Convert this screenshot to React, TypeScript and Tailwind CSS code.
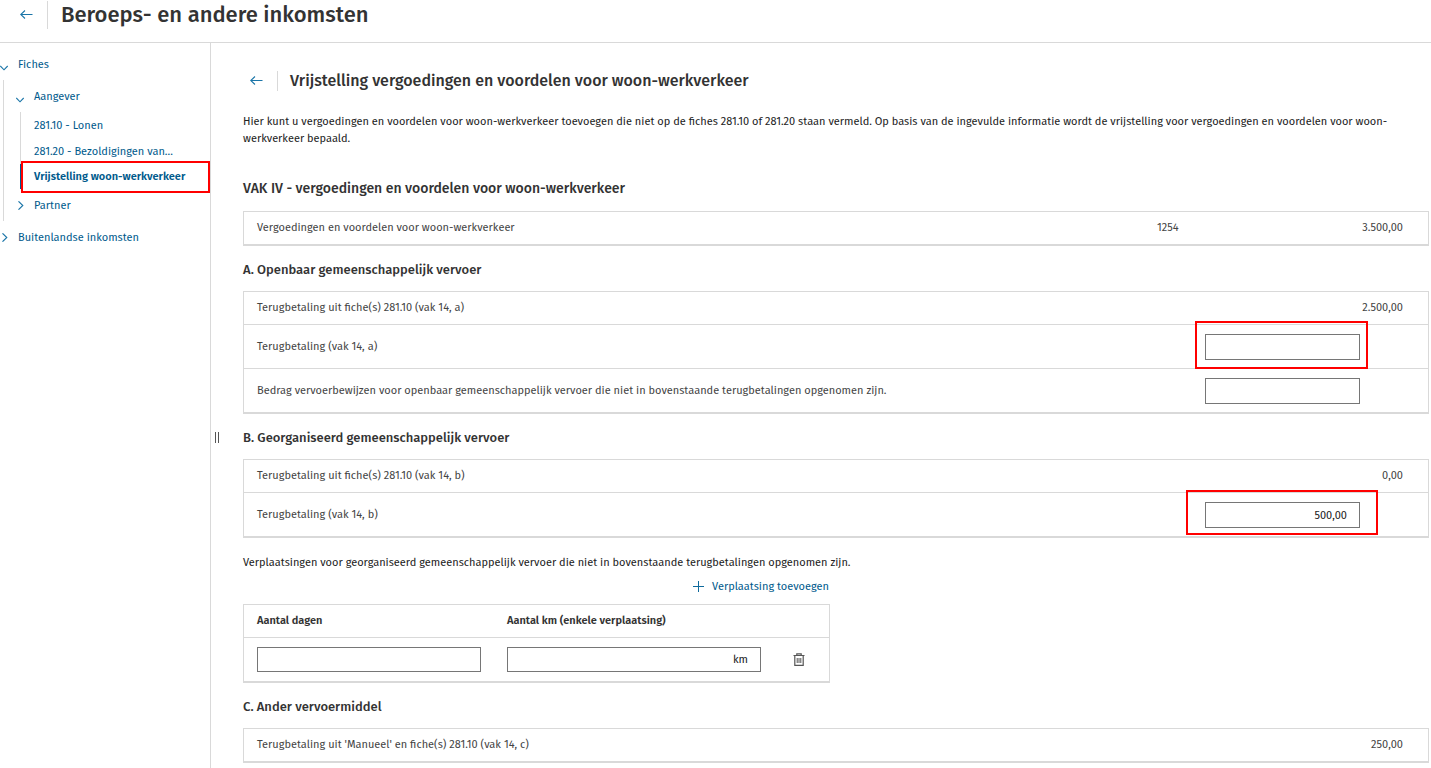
import { useState } from "react"
import type { ReactNode } from "react"
import clsx from "clsx"

function ArrowLeft() {
  return (
    <svg width="13" height="11" viewBox="0 0 13 11" fill="none" stroke="#1a75a8" strokeWidth="1.1">
      <path d="M5 .5.7 4.5 5 8.5M.7 4.5H12.5" />
    </svg>
  )
}

function ChevronDown() {
  return (
    <svg width="9" height="6" viewBox="0 0 9 6" fill="none" stroke="#1a75a8" strokeWidth="1.1">
      <path d="M.3 1 4 4.8 7.7 1" />
    </svg>
  )
}

function ChevronRight() {
  return (
    <svg width="6" height="9" viewBox="0 0 6 9" fill="none" stroke="#1a75a8" strokeWidth="1.1">
      <path d="M.5.3 4.8 4.5.5 8.7" />
    </svg>
  )
}

function Plus() {
  return (
    <svg width="11" height="11" viewBox="0 0 11 11" fill="none" stroke="#0f6a9c">
      <path d="M5.5 0v11M0 5.5h11" />
    </svg>
  )
}

function Trash() {
  return (
    <svg width="12" height="13" viewBox="0 0 12 13" fill="none" stroke="#555">
      <path d="M3.8 2V.8h4.4V2M.5 2.5h11M1.8 2.5v9.8h8.4V2.5" strokeWidth="1.2" />
      <path d="M4.2 5v5M6 5v5M7.8 5v5" />
    </svg>
  )
}

type TableProps = {
  label: string
  className?: string
  children: ReactNode
}

function Table({ label, className = "w-full", children }: TableProps) {
  return (
    <table
      aria-label={label}
      className={clsx(
        "border-separate border-spacing-0 border border-b-2 border-[#d9d9d9] text-[#444]",
        className
      )}
    >
      {children}
    </table>
  )
}

type AmountRowProps = {
  label: string
  code?: string
  amount: string
  last?: boolean
}

function AmountRow({ label, code, amount, last }: AmountRowProps) {
  const line = last ? "h-8" : "h-[33px] border-b border-[#d9d9d9]"

  return (
    <tr>
      <td className={clsx(line, "p-0 pb-[2px] pl-[13px]")}>{label}</td>
      <td className={clsx(line, "w-16 p-0 pb-[2px]")}>{code}</td>
      <td className={clsx(line, "w-[207px] p-0 pr-[25px] pb-[2px] text-right")}>{amount}</td>
    </tr>
  )
}

type InputRowProps = {
  id: string
  label: string
  value?: string
  mark?: string
  last?: boolean
}

function InputRow({ id, label, value = "", mark, last }: InputRowProps) {
  const [amount, setAmount] = useState(value)
  const line = last ? "h-[43px]" : "h-11 border-b border-[#d9d9d9]"

  return (
    <tr>
      <td className={clsx(line, "p-0 pl-[13px]")}>
        <label htmlFor={id}>{label}</label>
      </td>
      <td className={clsx(line, "w-16 p-0")} />
      <td className={clsx(line, "w-[207px] p-0 pr-[68px]")}>
        <div className="relative ml-auto h-[26px] w-[155px]">
          <input
            id={id}
            value={amount}
            onChange={(e) => setAmount(e.target.value)}
            className="block h-full w-full border border-[#767676] px-3 pt-px text-right text-[#222]"
          />
          {mark && (
            <span className={clsx("pointer-events-none absolute border-2 border-[#f00]", mark)} />
          )}
        </div>
      </td>
    </tr>
  )
}

function SectionTitle({ children }: { children: ReactNode }) {
  return (
    <h3 className="mt-[15px] mb-3 text-[13px] leading-[18px] font-medium">{children}</h3>
  )
}

function Sidebar() {
  return (
    <nav className="w-[211px] shrink-0 border-r border-[#d9d9d9] pt-[5px] text-[#005a8c]">
      <ul>
        <li>
          <a href="#fiches" className="flex h-8 items-center gap-[9px]">
            <span className="pt-2"><ChevronDown /></span>
            Fiches
          </a>
          <ul className="ml-[3px] border-l border-[#d9d9d9]">
            <li>
              <a href="#aangever" className="flex h-8 items-center gap-[9px] pl-3">
                <span className="pt-2"><ChevronDown /></span>
                Aangever
              </a>
              <ul className="ml-4 border-l border-[#d9d9d9]">
                <li>
                  <a href="#lonen" className="flex h-[26px] items-center pl-[13px]">281.10 - Lonen</a>
                </li>
                <li>
                  <a href="#bezoldigingen" className="flex h-[26px] items-center pl-[13px]">
                    281.20 - Bezoldigingen van...
                  </a>
                </li>
                <li className="relative">
                  <a
                    href="#woon-werkverkeer"
                    aria-current="page"
                    className="-ml-px flex h-[25px] items-center border-l-2 border-[#005a8c] pl-3 font-semibold"
                  >
                    Vrijstelling woon-werkverkeer
                  </a>
                  <span className="pointer-events-none absolute -top-[3px] right-0 -bottom-1 left-0 border-2 border-[#f00]" />
                </li>
              </ul>
            </li>
            <li>
              <a href="#partner" className="flex h-8 items-center gap-[10px] pl-[14px]">
                <ChevronRight />
                Partner
              </a>
            </li>
          </ul>
        </li>
        <li>
          <a href="#buitenland" className="flex h-8 items-center gap-[10px] pl-[2px]">
            <ChevronRight />
            Buitenlandse inkomsten
          </a>
        </li>
      </ul>
    </nav>
  )
}

export default function App() {
  const [days, setDays] = useState("")
  const [km, setKm] = useState("")

  return (
    <div className="flex min-h-screen flex-col bg-white font-['Fira_Sans','Noto_Sans',sans-serif] text-[11px] leading-[17px] text-[#333]">
      <header className="flex h-[43px] items-start border-b border-[#d9d9d9] pt-px">
        <button type="button" aria-label="Terug" className="flex h-7 w-[47px] items-center pl-5">
          <ArrowLeft />
        </button>
        <h1 className="border-l border-[#d9d9d9] pl-[13px] text-[22px] leading-7 font-medium">
          Beroeps- en andere inkomsten
        </h1>
      </header>

      <div className="flex flex-1">
        <Sidebar />

        <div className="flex w-8 shrink-0 items-center pt-16 pl-1">
          <div className="h-[11px] w-1 border-x border-[#555]" />
        </div>

        <main className="min-w-0 flex-1 pt-7 pr-[2px]">
          <div className="flex">
            <button type="button" aria-label="Vorige" className="flex h-5 w-[34px] items-center pl-[7px]">
              <ArrowLeft />
            </button>
            <h2 className="border-l border-[#d9d9d9] pl-3 text-[16px] leading-5 font-medium">
              Vrijstelling vergoedingen en voordelen voor woon-werkverkeer
            </h2>
          </div>

          <p className="mt-[22px] text-[#222]">
            Hier kunt u vergoedingen en voordelen voor woon-werkverkeer toevoegen die niet op de fiches 281.10 of
            281.20 staan vermeld. Op basis van de ingevulde informatie wordt de vrijstelling voor vergoedingen en
            voordelen voor woon-werkverkeer bepaald.
          </p>

          <h2 className="mt-8 mb-3 text-[14px] leading-5 font-medium">
            VAK IV - vergoedingen en voordelen voor woon-werkverkeer
          </h2>
          <Table label="Vak IV">
            <tbody>
              <AmountRow
                label="Vergoedingen en voordelen voor woon-werkverkeer"
                code="1254"
                amount="3.500,00"
                last
              />
            </tbody>
          </Table>

          <SectionTitle>A. Openbaar gemeenschappelijk vervoer</SectionTitle>
          <Table label="Openbaar gemeenschappelijk vervoer">
            <tbody>
              <AmountRow label="Terugbetaling uit fiche(s) 281.10 (vak 14, a)" amount="2.500,00" />
              <InputRow
                id="terugbetaling-a"
                label="Terugbetaling (vak 14, a)"
                mark="-top-[13px] -right-2 -bottom-[9px] -left-[10px]"
              />
              <InputRow
                id="vervoerbewijzen"
                label="Bedrag vervoerbewijzen voor openbaar gemeenschappelijk vervoer die niet in bovenstaande terugbetalingen opgenomen zijn."
                last
              />
            </tbody>
          </Table>

          <SectionTitle>B. Georganiseerd gemeenschappelijk vervoer</SectionTitle>
          <Table label="Georganiseerd gemeenschappelijk vervoer">
            <tbody>
              <AmountRow label="Terugbetaling uit fiche(s) 281.10 (vak 14, b)" amount="0,00" />
              <InputRow
                id="terugbetaling-b"
                label="Terugbetaling (vak 14, b)"
                value="500,00"
                mark="-top-3 -right-[18px] -bottom-[7px] -left-[19px]"
                last
              />
            </tbody>
          </Table>

          <p className="mt-4 text-[#222]">
            Verplaatsingen voor georganiseerd gemeenschappelijk vervoer die niet in bovenstaande terugbetalingen
            opgenomen zijn.
          </p>

          <div className="w-[587px] max-w-full">
            <div className="mt-[7px] mb-[9px] flex justify-end pr-px">
              <button type="button" className="flex items-center gap-2 text-[#005a8c]">
                <Plus />
                Verplaatsing toevoegen
              </button>
            </div>
            <Table label="Verplaatsingen" className="w-full table-fixed">
              <thead>
                <tr className="text-left text-[#333]">
                  <th className="h-[33px] w-[250px] border-b border-[#d9d9d9] p-0 pb-[2px] pl-[13px] font-semibold">
                    Aantal dagen
                  </th>
                  <th className="h-[33px] border-b border-[#d9d9d9] p-0 pb-[2px] pl-[13px] font-semibold">
                    Aantal km (enkele verplaatsing)
                  </th>
                  <th className="h-[33px] w-[55px] border-b border-[#d9d9d9] p-0" />
                </tr>
              </thead>
              <tbody>
                <tr>
                  <td className="h-[43px] p-0 pr-[13px] pl-[13px]">
                    <input
                      aria-label="Aantal dagen"
                      value={days}
                      onChange={(e) => setDays(e.target.value)}
                      className="block h-[25px] w-full border border-[#767676] px-3"
                    />
                  </td>
                  <td className="h-[43px] p-0 pr-[13px] pl-[13px]">
                    <div className="flex h-[25px] items-center border border-[#767676] pr-3 text-[#222]">
                      <input
                        aria-label="Aantal km (enkele verplaatsing)"
                        value={km}
                        onChange={(e) => setKm(e.target.value)}
                        className="h-full min-w-0 flex-1 px-3 text-right outline-none"
                      />
                      km
                    </div>
                  </td>
                  <td className="h-[43px] p-0 pl-[19px]">
                    <button type="button" aria-label="Verwijderen" className="block">
                      <Trash />
                    </button>
                  </td>
                </tr>
              </tbody>
            </Table>
          </div>

          <SectionTitle>C. Ander vervoermiddel</SectionTitle>
          <Table label="Ander vervoermiddel">
            <tbody>
              <AmountRow
                label="Terugbetaling uit 'Manueel' en fiche(s) 281.10 (vak 14, c)"
                amount="250,00"
                last
              />
            </tbody>
          </Table>
        </main>
      </div>
    </div>
  )
}
